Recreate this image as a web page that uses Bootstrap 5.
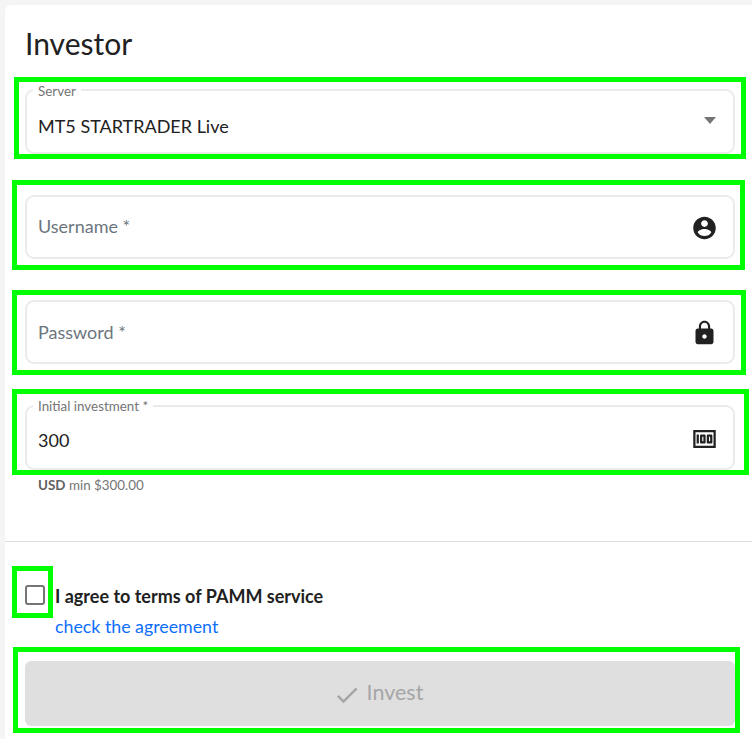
<!DOCTYPE html>
<html lang="en">
<head>
  <meta charset="UTF-8" />
  <meta name="viewport" content="width=device-width, initial-scale=1" />
  <title>Investor</title>
  <link href="https://cdn.jsdelivr.net/npm/bootstrap@5.3.2/dist/css/bootstrap.min.css" rel="stylesheet">
  <style>
    html, body { height: 100%; }
    body {
      background: #f5f5f5;
      color: #212121;
      font-family: "Lato", "Noto Sans", sans-serif;
      overflow: hidden;
    }
    .invest-card {
      margin: 5px 0 0 5px;
      height: 740px;
      border: 0;
      border-radius: 6px 0 0 0;
      background: #fff;
    }
    .invest-title { font-size: 30px; font-weight: 400; line-height: 36px; margin: 20px 0 28px 20px; color: #212121; }
    .fields { margin: 0 17px 0 20px; gap: 41px; }
    .field { height: 64px; }
    .field-tall { height: 65px; }
    .field .form-control, .field .form-select {
      height: 100%;
      border: 2px solid #ebebeb;
      border-radius: 9px;
      padding: 0 60px 0 11px;
      font-size: 18px;
      color: #212121;
      background-image: none;
      box-shadow: none;
    }
    .field .form-control::placeholder { color: #6c757d; opacity: 1; }
    .field .form-select.filled { padding-top: 9px; }
    .field .form-control.filled { padding-top: 5px; }
    .field .form-control.user-input { padding-bottom: 2px; }
    .float-label {
      position: absolute;
      left: 8px;
      top: -5px;
      padding: 0 5px;
      background: #fff;
      color: #757575;
      font-size: 13.4px;
      line-height: 14px;
    }
    .field-tall .amount-label { top: -6px; }
    .field-icon { position: absolute; right: 17px; top: calc(50% + 1px); transform: translateY(-50%); width: 27px; height: 27px; fill: #212121; }
    .field-caret { position: absolute; right: 19px; top: 28px; width: 12px; height: 7px; fill: #757575; }
    .hint { margin: 7px 0 0 33px; font-size: 13.4px; line-height: 16px; color: #757575; }
    .hint b { color: #616161; }
    .divider { margin: 48px 0 0; border-color: #ddd; opacity: 1; border-top-width: 1px; }
    .agree { margin: 43px 17px 0 20px; gap: 10px; }
    .agree .form-check-input {
      width: 20px; height: 20px; margin: 0;
      border: 2px solid #757575; border-radius: 3px; flex: none;
    }
    .agree-title { font-size: 18px; font-weight: 700; line-height: 22px; color: #212121; }
    .agree-link { display: block; font-size: 17.8px; line-height: 22px; margin-top: 8px; color: #0d6efd; text-decoration: none; }
    .invest-btn {
      display: flex; align-items: center; justify-content: center; gap: 6px;
      margin: 24px 17px 0 20px;
      width: 710px; height: 65px;
      padding: 0 16px 2px 12px;
      background: #dfdfdf; border: 0; border-radius: 6px;
      font-size: 21.5px; color: #a6a6a6;
    }
    .invest-btn:disabled { background: #dfdfdf; color: #a6a6a6; opacity: 1; }
    .invest-btn svg { width: 28px; height: 28px; fill: #a6a6a6; margin-top: 4px; }
    /* green annotation boxes drawn over the form */
    .mark-box { position: absolute; border: 5px solid #00ff00; pointer-events: none; }
    .mb-server { left: 14px; top: 77px; width: 732px; height: 82px; }
    .mb-user { left: 12px; top: 180px; width: 733px; height: 90px; }
    .mb-pass { left: 12px; top: 290px; width: 734px; height: 85px; }
    .mb-amount { left: 12px; top: 389px; width: 737px; height: 86px; }
    .mb-check { left: 12px; top: 566px; width: 41px; height: 52px; }
    .mb-invest { left: 13px; top: 647px; width: 727px; height: 86px; }
  </style>
</head>
<body>

<div class="card invest-card">
  <h1 class="invest-title">Investor</h1>

  <div class="fields d-flex flex-column">
    <div class="field field-tall position-relative">
      <select class="form-select filled">
        <option>MT5 STARTRADER Live</option>
      </select>
      <span class="float-label">Server</span>
      <svg class="field-caret" viewBox="0 0 14 7" preserveAspectRatio="none"><path d="M0 0h14L7 7z"/></svg>
    </div>

    <div class="field position-relative">
      <input type="text" class="form-control user-input" placeholder="Username *">
      <svg class="field-icon" viewBox="0 0 24 24"><path d="M12 2C6.48 2 2 6.48 2 12s4.48 10 10 10 10-4.48 10-10S17.52 2 12 2zm0 3c1.66 0 3 1.34 3 3s-1.34 3-3 3-3-1.34-3-3 1.34-3 3-3zm0 14.2c-2.5 0-4.71-1.28-6-3.22.03-1.99 4-3.08 6-3.08 1.99 0 5.97 1.09 6 3.08-1.29 1.94-3.5 3.22-6 3.22z"/></svg>
    </div>

    <div class="field position-relative">
      <input type="password" class="form-control" placeholder="Password *">
      <svg class="field-icon" viewBox="0 0 24 24"><path d="M18 8h-1V6c0-2.76-2.24-5-5-5S7 3.24 7 6v2H6c-1.1 0-2 .9-2 2v10c0 1.1.9 2 2 2h12c1.1 0 2-.9 2-2V10c0-1.1-.9-2-2-2zm-6 9c-1.1 0-2-.9-2-2s.9-2 2-2 2 .9 2 2-.9 2-2 2zm3.1-9H8.9V6c0-1.71 1.39-3.1 3.1-3.1 1.71 0 3.1 1.39 3.1 3.1v2z"/></svg>
    </div>

    <div class="field field-tall position-relative">
      <input type="text" class="form-control filled" value="300">
      <span class="float-label amount-label">Initial investment *</span>
      <svg class="field-icon" viewBox="0 0 24 24"><path d="M5 8h2v8H5zm7 0H9c-.55 0-1 .45-1 1v6c0 .55.45 1 1 1h3c.55 0 1-.45 1-1V9c0-.55-.45-1-1-1zm-1 6h-1v-4h1v4zm7-6h-3c-.55 0-1 .45-1 1v6c0 .55.45 1 1 1h3c.55 0 1-.45 1-1V9c0-.55-.45-1-1-1zm-1 6h-1v-4h1v4z"/><path d="M2 4v16h20V4H2zm2 14V6h16v12H4z"/></svg>
    </div>
  </div>

  <div class="hint"><b>USD</b> min $300.00</div>

  <hr class="divider">

  <div class="agree d-flex align-items-start">
    <input class="form-check-input" type="checkbox" id="agree">
    <div>
      <label class="agree-title d-block" for="agree">I agree to terms of PAMM service</label>
      <a href="#" class="agree-link">check the agreement</a>
    </div>
  </div>

  <button class="btn invest-btn" disabled>
    <svg viewBox="0 0 24 24"><path d="M9 16.17 4.83 12l-1.42 1.41L9 19 21 7l-1.41-1.41z"/></svg>
    Invest
  </button>
</div>

<div class="mark-box mb-server"></div>
<div class="mark-box mb-user"></div>
<div class="mark-box mb-pass"></div>
<div class="mark-box mb-amount"></div>
<div class="mark-box mb-check"></div>
<div class="mark-box mb-invest"></div>

<script src="https://cdn.jsdelivr.net/npm/bootstrap@5.3.2/dist/js/bootstrap.bundle.min.js"></script>
</body>
</html>
